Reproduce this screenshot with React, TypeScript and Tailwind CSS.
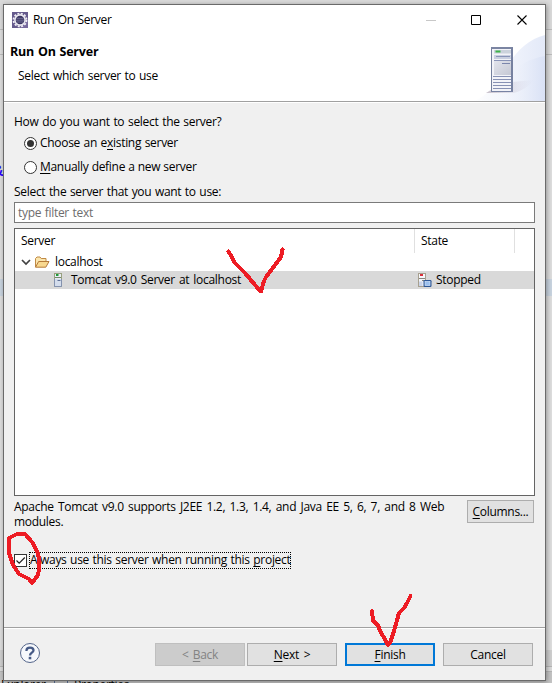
import type { ReactNode } from 'react';

function Key({ children }: { children: ReactNode }) {
  return <span className="underline decoration-1 underline-offset-2 [text-decoration-skip-ink:none]">{children}</span>;
}

function EclipseIcon() {
  return (
    <svg width="16" height="16" viewBox="0 0 16 16">
      <rect width="16" height="16" fill="#655a8c" />
      <rect x="8" y="8" width="8" height="8" fill="#77699d" />
      <circle cx="8" cy="8" r="6.5" fill="none" stroke="#f0eef5" strokeWidth="1.8" strokeDasharray="2 1.4" />
      <circle cx="8" cy="8" r="5.1" fill="#3a3560" stroke="#e9e7ef" strokeWidth="1.6" />
      <path d="M4.500 6.300h7M4 8.200h8M4.500 10h7" stroke="#77759c" strokeWidth=".9" />
    </svg>
  );
}

function HeaderArt() {
  return (
    <svg width="73" height="66" viewBox="0 0 73 66" className="block">
      <defs>
        <linearGradient id="swoosh" x1="0" x2="1">
          <stop offset="0" stopColor="#ffffff" />
          <stop offset="1" stopColor="#e3e9f8" />
        </linearGradient>
        <linearGradient id="swoosh2" x1="0" x2="1">
          <stop offset="0" stopColor="#ffffff" stopOpacity="0" />
          <stop offset="1" stopColor="#d9e1f5" />
        </linearGradient>
        <linearGradient id="shade" x1="0" x2="1">
          <stop offset="0" stopColor="#a89aa8" stopOpacity=".6" />
          <stop offset="1" stopColor="#c8c4d8" stopOpacity="0" />
        </linearGradient>
        <linearGradient id="panel" x1="0" x2="1" y2="1">
          <stop offset="0" stopColor="#e2e4ec" />
          <stop offset="1" stopColor="#c5c8d4" />
        </linearGradient>
      </defs>
      <path d="M0 66C12 64 24 50 34 33S57 4 73 0V66Z" fill="url(#swoosh)" />
      <path d="M20 66C30 42 48 25 73 21V66Z" fill="url(#swoosh2)" />
      <path d="M40 47L62 45C56 52 48 57 41 58L14 58L19 55Z" fill="url(#shade)" />
      <rect x="19.5" y="12.5" width="21" height="44" fill="#f2f3f8" stroke="#747f9c" />
      <path d="M19 13h22" stroke="#7b85a2" strokeWidth="2" />
      <path d="M40 13v44" stroke="#7681a0" strokeWidth="2" />
      <rect x="22" y="15" width="17" height="3.5" fill="#cbd2dc" />
      <rect x="23.5" y="15.5" width="5" height="2" fill="#3fb34b" />
      <rect x="22" y="20" width="17" height="4" fill="#c9cfe0" />
      <path d="M24 21.500h14" stroke="#8994b8" />
      <path d="M22 25.500h17" stroke="#8994b8" />
      <rect x="22" y="26" width="17" height="14" fill="url(#panel)" />
      <path d="M30 28.500h8" stroke="#7b86ac" />
      <path d="M21 41.500h18M21 44.500h18M21 47.500h18M21 50.500h18M21 53.500h18" stroke="#8791b4" />
      <path d="M19 56.500h22" stroke="#7883a4" />
    </svg>
  );
}

function FolderIcon() {
  return (
    <svg width="16" height="16" viewBox="0 0 16 16">
      <path d="M1.500 13V4.500L3 3H6l1.200 1.500H12V7.500" fill="#fbe6ae" stroke="#c08a44" />
      <path d="M1.500 13.200L4.600 7.500H15L11.800 13.200Z" fill="#f8d88f" stroke="#b57a3a" />
    </svg>
  );
}

function ServerIcon() {
  return (
    <svg width="16" height="16" viewBox="0 0 16 16">
      <rect x="4.500" y="1.500" width="7" height="13" fill="#e8ecf2" stroke="#98a07f" />
      <path d="M11.500 7v7.500h-7V7" fill="#d4ddec" stroke="#8492ae" />
      <path d="M6 3h2.500" stroke="#1e9b38" strokeWidth="2" />
      <path d="M5 5.500h6" stroke="#73876c" />
      <path d="M7.500 8.500H10.500" stroke="#5f7196" />
    </svg>
  );
}

function StoppedIcon() {
  return (
    <svg width="16" height="16" viewBox="0 0 16 16">
      <rect x="1.500" y="1.500" width="7" height="13" fill="#f5f6fa" stroke="#a7a08f" />
      <path d="M3 3h3" stroke="#d8303c" strokeWidth="2" />
      <path d="M2 6.500h6M5 8.500h2" stroke="#87867e" />
      <rect x="2" y="9.500" width="3.500" height="4.500" fill="#cbd4e8" />
      <rect x="6.500" y="8" width="8" height="7" rx="1.200" fill="#2d5796" />
      <rect x="8" y="9.500" width="5" height="4" fill="#9cc0ee" stroke="#d5e5fa" strokeWidth=".7" />
    </svg>
  );
}

function Backdrop() {
  return (
    <div className="absolute inset-0 -z-10 flex flex-col overflow-hidden bg-[#dedede]">
      <div className="h-[30px] shrink-0 border-b border-[#bdbdbd] bg-[#dadada]" />
      <div className="h-[25px] shrink-0 border-b border-[#bdbdbd]" />
      <div className="h-[104px] shrink-0" />
      <div className="h-[120px] shrink-0 text-[17px] leading-[22px] font-bold text-[#2a00ff]">
        <span className="-ml-[7px] font-['Liberation_Mono',monospace]">&amp;</span>
      </div>
      <div className="h-[17px] shrink-0 bg-[#c9d4e0]" />
      <div className="h-[354px] shrink-0" />
      <div className="h-[17px] shrink-0 border-b border-[#b5b5b5] bg-[#cfcfcf]" />
      <div className="h-[5px] shrink-0 border-b border-[#b5b5b5] bg-[#dadada]" />
      <div className="flex h-[11px] shrink-0 items-start bg-[#c4c4c4] text-[12px] leading-4 text-black">
        <span className="mt-[5px] w-[54px] pl-px">Explorer</span>
        <span className="mt-[8px] mr-[6px] h-4 w-[14px] border border-[#5a6f94]" />
        <span className="mt-[5px]">Properties</span>
      </div>
    </div>
  );
}

function Radio({ on, children }: { on?: boolean; children: ReactNode }) {
  return (
    <div className="flex h-6 items-center pl-[10px]">
      <span className="mr-[3px] flex size-[13px] items-center justify-center rounded-full border border-[#333] bg-white">
        {on && <span className="size-[7px] rounded-full bg-[#333]" />}
      </span>
      <span className="leading-4">{children}</span>
    </div>
  );
}

function Button({ className, children }: { className: string; children: ReactNode }) {
  return (
    <button className={`flex h-[23px] items-center justify-center leading-4 ${className}`}>
      <span>{children}</span>
    </button>
  );
}

export default function App() {
  return (
    <div className="relative isolate h-[683px] w-[552px] overflow-hidden pt-1 pl-[3px] font-['Open_Sans','Noto_Sans_CJK_KR',sans-serif] text-[12px] tracking-[-0.3px] whitespace-nowrap text-black [word-spacing:0.75px]">
      <Backdrop />
      <main className="flex h-[677px] w-[543px] flex-col border border-[#6a6a6a] bg-[#f0f0f0] shadow-[1px_1px_5px_rgba(0,0,0,0.35)]">
        <header className="flex h-[96px] shrink-0 flex-col bg-white">
          <div className="flex h-[30px] items-center pl-2">
            <EclipseIcon />
            <span className="ml-[5px] grow">Run On Server</span>
            <svg width="112" height="14" viewBox="0 0 112 14">
              <path d="M0 7.500h10" stroke="#c8c8c8" />
              <path d="M45.500 2.500h9v9h-9z" fill="none" stroke="#000" />
              <path d="M91.500 2.500l9 9M100.500 2.500l-9 9" fill="none" stroke="#000" strokeWidth="1.100" />
            </svg>
            <span className="w-[7px]" />
          </div>
          <div className="flex h-[66px] justify-between">
            <div className="pt-2 pl-1.5">
              <h1 className="text-[12.5px] leading-[18px] font-bold tracking-[-0.2px]">Run On Server</h1>
              <p className="mt-1.5 pl-2 leading-[18px]">Select which server to use</p>
            </div>
            <HeaderArt />
          </div>
        </header>
        <div className="h-0.5 shrink-0 border-t border-[#a0a0a0] bg-white" />

        <section className="h-[524px] shrink-0 px-[10px] pt-[9px]">
          <p className="h-[19px] pt-px leading-[17px] [word-spacing:0.9px]">How do you want to select the server?</p>
          <Radio on>Choose an e<Key>x</Key>isting server</Radio>
          <Radio><span className="[word-spacing:0.3px]"><Key>M</Key>anually define a new server</span></Radio>
          <p className="mt-[3px] h-5 pt-px leading-[17px]">Select the server that you want to use:</p>
          <div className="flex h-[21px] w-[521px] items-center border border-[#7a7a7a] bg-white pl-[3px] text-[#6d6d6d]">type filter text</div>

          <div className="mt-[5px] h-[268px] w-[521px] border border-[#646464] bg-white">
            <div className="flex h-6 leading-6">
              <span className="w-[400px] border-r border-[#e0e0e0] pl-1.5">Server</span>
              <span className="w-[100px] border-r border-[#e0e0e0] pl-1.5">State</span>
            </div>
            <div className="flex h-[18px] items-center pl-1.5">
              <svg width="10" height="8" viewBox="0 0 10 8"><path d="M1 2l4 4 4-4" fill="none" stroke="#404040" strokeWidth="1.700" /></svg>
              <span className="mr-1 ml-[3px]"><FolderIcon /></span>
              <span className="pl-px">localhost</span>
            </div>
            <div className="flex h-[18px] items-center bg-[#d9d9d9]">
              <span className="ml-[35px]"><ServerIcon /></span>
              <span className="ml-[5px] w-[346px] [word-spacing:1.3px]">Tomcat v9.0 Server at localhost</span>
              <StoppedIcon />
              <span className="ml-[3px]">Stopped</span>
            </div>
          </div>

          <div className="flex h-[56px] pt-[3px]">
            <p className="w-[453px] leading-[15px] [word-spacing:1.5px]">Apache Tomcat v9.0 supports J2EE 1.2, 1.3, 1.4, and Java EE 5, 6, 7, and 8 Web<br />modules.</p>
            <Button className="mt-px w-[67px] border border-[#adadad] bg-[#e1e1e1]"><Key>C</Key>olumns...</Button>
          </div>
          <div className="flex h-[17px] items-center">
            <span className="mr-0.5 flex size-[13px] border border-[#333] bg-white">
              <svg width="11" height="11" viewBox="0 0 11 11"><path d="M1.500 5.500L4.200 8.200 9.800 2.500" fill="none" stroke="#222" strokeWidth="1.200" /></svg>
            </span>
            <span className="h-[17px] border border-dotted border-black leading-[14px]">Always use this server when running this <Key>p</Key>roject</span>
          </div>
        </section>

        <footer className="flex grow items-start border-t border-[#a0a0a0] pl-4 shadow-[inset_0_1px_0_white]">
          <svg width="21" height="21" viewBox="0 0 21 21" className="mt-[15px] mr-[114px]">
            <circle cx="10" cy="10" r="9.500" fill="#f6f8fc" stroke="#54658a" />
            <path d="M6.500 7.900V7.300C6.500 3.700 13.500 3.700 13.500 7.300 13.500 9.700 10 9.700 10 12.500" fill="none" stroke="#465a86" strokeWidth="2.300" />
            <rect x="8.700" y="13.800" width="2.600" height="2.500" fill="#465a86" />
          </svg>
          <Button className="mt-[15px] w-[90px] border border-[#bfbfbf] bg-[#ccc] text-[#838383] [word-spacing:1.5px]">&lt; <Key>B</Key>ack</Button>
          <Button className="mt-[15px] ml-0.5 w-[90px] border border-[#adadad] bg-[#e1e1e1] [word-spacing:2px]"><Key>N</Key>ext &gt;</Button>
          <Button className="mt-[15px] ml-2 w-[90px] border-2 border-[#0078d7] bg-[#e1e1e1]"><Key>F</Key>inish</Button>
          <Button className="mt-[15px] ml-2 w-[90px] border border-[#adadad] bg-[#e1e1e1]">Cancel</Button>
        </footer>
      </main>

      <svg className="pointer-events-none absolute inset-0" width="552" height="683" viewBox="0 0 552 683" fill="none" stroke="#ed1c24" strokeWidth="4" strokeLinejoin="round" strokeLinecap="round" shapeRendering="crispEdges">
        <path d="M228.500 251.500L232 257 234 262 245 273 255 285 261 291.500 264 281 266 277 275 265 281 257 282.500 249.500" />
        <path d="M372 611L373 621 378 625 380 631 383 636 388 645 390 643 394 631 399 613 404 608 407 603 410.500 596" />
        <path d="M17 534H25L32 542 37 551 39 558 39 569 38 575 32 583 29 579 19 574 13 565 9 553 9 538Z" />
      </svg>
    </div>
  );
}
